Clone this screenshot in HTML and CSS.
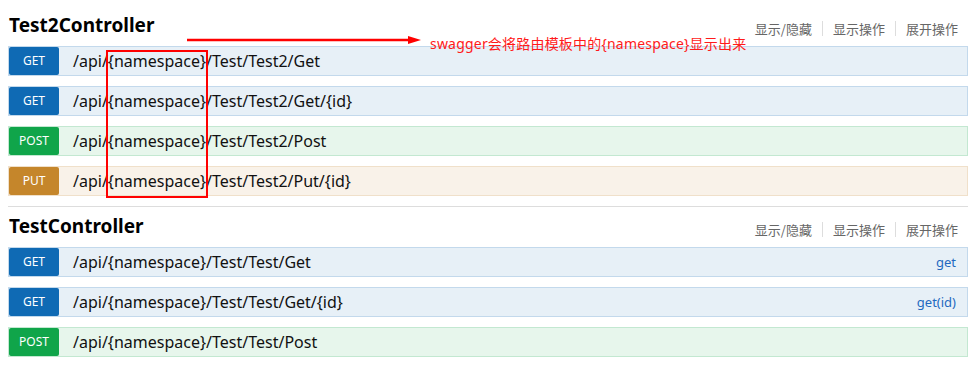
FILE: index.html
```html
<!DOCTYPE html>
<html lang="zh-CN">
<head>
    <meta charset="UTF-8">
    <title>Swagger - Controllers</title>
    <link rel="stylesheet" href="styles.css">
</head>
<body>
    <div class="page">
        <!-- Test2Controller -->
        <div class="resource">
            <div class="resource-header">
                <h2 class="resource-title">Test2Controller</h2>
                <ul class="options">
                    <li>显示/隐藏</li>
                    <li>显示操作</li>
                    <li>展开操作</li>
                </ul>
            </div>
            <div class="op get">
                <span class="method">GET</span>
                <span class="path">/api/{namespace}/Test/Test2/Get</span>
            </div>
            <div class="op get">
                <span class="method">GET</span>
                <span class="path">/api/{namespace}/Test/Test2/Get/{id}</span>
            </div>
            <div class="op post">
                <span class="method">POST</span>
                <span class="path">/api/{namespace}/Test/Test2/Post</span>
            </div>
            <div class="op put">
                <span class="method">PUT</span>
                <span class="path">/api/{namespace}/Test/Test2/Put/{id}</span>
            </div>
        </div>

        <!-- TestController -->
        <div class="resource second">
            <div class="resource-header">
                <h2 class="resource-title">TestController</h2>
                <ul class="options">
                    <li>显示/隐藏</li>
                    <li>显示操作</li>
                    <li>展开操作</li>
                </ul>
            </div>
            <div class="op get">
                <span class="method">GET</span>
                <span class="path">/api/{namespace}/Test/Test/Get</span>
                <span class="nickname">get</span>
            </div>
            <div class="op get">
                <span class="method">GET</span>
                <span class="path">/api/{namespace}/Test/Test/Get/{id}</span>
                <span class="nickname">get(id)</span>
            </div>
            <div class="op post">
                <span class="method">POST</span>
                <span class="path">/api/{namespace}/Test/Test/Post</span>
            </div>
        </div>

        <!-- 标注 -->
        <div class="mark-box"></div>
        <svg class="mark-arrow" width="240" height="12" viewBox="0 0 240 12">
            <line x1="0" y1="6" x2="224" y2="6" stroke="#ff0000" stroke-width="2.5"/>
            <polygon points="221,2 234,6 221,10" fill="#ff0000"/>
        </svg>
        <div class="mark-text">swagger会将路由模板中的{namespace}显示出来</div>
    </div>
</body>
</html>
```

FILE: styles.css
```css
* {
    margin: 0;
    padding: 0;
    box-sizing: border-box;
}

body {
    font-family: 'Noto Sans', 'Noto Sans CJK SC', sans-serif;
    background: white;
    color: #222;
}

.page {
    position: relative;
    width: 977px;
    padding: 6px 9px 0 8px;
}

.resource-header {
    display: flex;
    justify-content: space-between;
    align-items: flex-start;
    height: 40px;
}

.resource-title {
    font-size: 19px;
    font-weight: bold;
    line-height: 26px;
    padding-top: 6px;
    padding-left: 1px;
    color: #000;
}

.options {
    list-style: none;
    display: flex;
    margin-top: 15px;
}

.options li {
    font-family: 'Noto Sans CJK SC', sans-serif;
    font-size: 13px;
    line-height: 15px;
    color: #666;
    padding: 0 10px;
    border-right: 1px solid #ddd;
}

.options li:first-child {
    padding-left: 0;
}

.options li:last-child {
    border-right: none;
}

.op {
    display: flex;
    align-items: center;
    height: 30px;
    margin-bottom: 10px;
    border: 1px solid;
}

.method {
    width: 50px;
    height: 28px;
    line-height: 28px;
    text-align: center;
    color: white;
    font-size: 12px;
    border-radius: 2px;
}

.path {
    margin-left: 14px;
    font-size: 16px;
    color: #111;
}

.nickname {
    margin-left: auto;
    padding-right: 11px;
    font-size: 13px;
    color: #1f69c0;
}

.op.get {
    background: #e7f0f7;
    border-color: #c3d9ec;
}

.op.get .method {
    background: #0f6ab4;
}

.op.post {
    background: #e7f6ec;
    border-color: #c3e8d1;
}

.op.post .method {
    background: #10a54a;
}

.op.put {
    background: #f9f2e9;
    border-color: #f0e0ca;
}

.op.put .method {
    background: #c5862b;
}

.second {
    border-top: 1px solid #ddd;
}

/* 标注层 */
.mark-box {
    position: absolute;
    left: 106px;
    top: 50px;
    width: 102px;
    height: 148px;
    border: 2px solid #ff0000;
}

.mark-arrow {
    position: absolute;
    left: 187px;
    top: 34px;
}

.mark-text {
    position: absolute;
    left: 430px;
    top: 34px;
    font-size: 14px;
    line-height: 20px;
    letter-spacing: 0.2px;
    color: #ff1a1a;
    white-space: nowrap;
}
```
